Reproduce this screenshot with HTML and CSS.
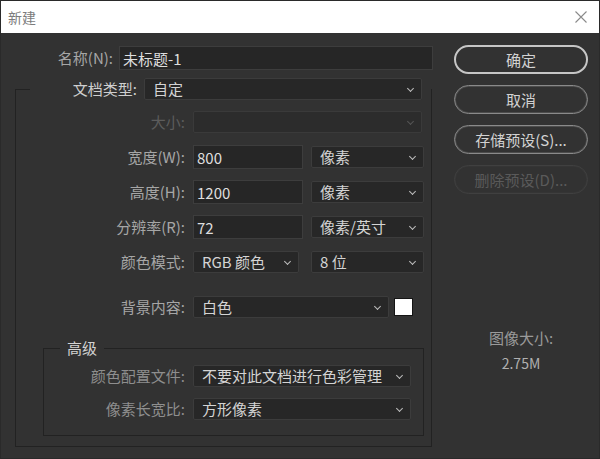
FILE: index.html
```html
<!DOCTYPE html>
<html lang="zh-CN">
<head>
  <meta charset="UTF-8" />
  <title>新建</title>
  <link rel="stylesheet" href="styles.css">
</head>
<body>
  <div class="window">
    <div class="titlebar">
      <span class="title">新建</span>
      <svg class="close" width="12" height="12" viewBox="0 0 12 12">
        <path d="M0.5 0.5L11.5 11.5M11.5 0.5L0.5 11.5" stroke="#8a8a8a" stroke-width="1.1" fill="none"/>
      </svg>
    </div>

    <div class="content">
      <div class="form">
        <div class="name-row">
          <label class="lbl name-lbl">名称(N):</label>
          <input class="field name-field" type="text" value="未标题-1">
        </div>

        <fieldset class="frame">
          <legend class="frame-head">
            <label class="lbl type-lbl">文档类型:</label>
            <div class="select type-select">自定</div>
          </legend>

          <div class="rows">
            <div class="row">
              <label class="lbl off">大小:</label>
              <div class="select size-select disabled"></div>
            </div>
            <div class="row">
              <label class="lbl">宽度(W):</label>
              <input class="field num" type="text" value="800">
              <div class="select unit">像素</div>
            </div>
            <div class="row">
              <label class="lbl">高度(H):</label>
              <input class="field num" type="text" value="1200">
              <div class="select unit">像素</div>
            </div>
            <div class="row">
              <label class="lbl">分辨率(R):</label>
              <input class="field num" type="text" value="72">
              <div class="select unit">像素/英寸</div>
            </div>
            <div class="row">
              <label class="lbl">颜色模式:</label>
              <div class="select mode">RGB 颜色</div>
              <div class="select unit">8 位</div>
            </div>
            <div class="row bg-row">
              <label class="lbl">背景内容:</label>
              <div class="select bg-select">白色</div>
              <div class="swatch"></div>
            </div>
          </div>

          <fieldset class="frame advanced">
            <legend class="adv-head">高级</legend>
            <div class="rows adv-rows">
              <div class="row">
                <label class="lbl adv-lbl">颜色配置文件:</label>
                <div class="select adv-select">不要对此文档进行色彩管理</div>
              </div>
              <div class="row">
                <label class="lbl adv-lbl">像素长宽比:</label>
                <div class="select adv-select">方形像素</div>
              </div>
            </div>
          </fieldset>
        </fieldset>
      </div>

      <div class="side">
        <div class="btn primary">确定</div>
        <div class="btn">取消</div>
        <div class="btn">存储预设(S)...</div>
        <div class="btn disabled">删除预设(D)...</div>

        <div class="info">
          <div class="info-title">图像大小:</div>
          <div class="info-value">2.75M</div>
        </div>
      </div>
    </div>
  </div>
</body>
</html>
```

FILE: styles.css
```css
* {
  box-sizing: border-box;
}
body {
  margin: 0;
  background: #323232;
  font-family: "Noto Sans CJK SC", "Noto Sans", sans-serif;
  font-size: 15px;
  color: #a8a8a8;
}
.window {
  width: 600px;
  height: 459px;
  border: 1px solid #2a2a2a;
  background: #323232;
  overflow: hidden;
}
.titlebar {
  height: 32px;
  background: #fff;
  display: flex;
  align-items: center;
  justify-content: space-between;
  padding: 0 12px 0 7px;
}
.title {
  font-size: 14px;
  color: #7c7c7c;
}
.close {
  display: block;
}

.content {
  display: flex;
  padding-top: 13px;
}
.form {
  width: 432px;
}

.lbl {
  text-align: right;
  color: #a6a6a6;
  white-space: nowrap;
  line-height: 24px;
}
.lbl.off {
  color: #5c5c5c;
}

.field {
  height: 24px;
  background: #262626;
  border: 1px solid #3d3d3d;
  color: #dedede;
  font-family: inherit;
  font-size: 15px;
  padding: 0 3px;
  outline: none;
  margin: 0;
}
.select {
  position: relative;
  height: 22px;
  line-height: 20px;
  background: #272727;
  border: 1px solid #3c3c3c;
  border-radius: 2px;
  color: #d4d4d4;
  padding: 0 20px 0 8px;
  white-space: nowrap;
  overflow: hidden;
}
.select::after {
  content: "";
  position: absolute;
  right: 8px;
  top: 7px;
  width: 4px;
  height: 4px;
  border-right: 1.5px solid #bdbdbd;
  border-bottom: 1.5px solid #bdbdbd;
  transform: rotate(45deg);
}
.select.disabled {
  background: #2c2c2c;
  border-color: #3a3a3a;
}
.select.disabled::after {
  border-color: #555;
}

.name-row {
  display: flex;
  align-items: center;
  gap: 6px;
}
.name-lbl {
  width: 112px;
}
.name-field {
  width: 314px;
}

.frame {
  margin: 7px 0 0 14px;
  width: 417px;
  padding: 0 0 10px 0;
  border: 1px solid #222;
}
.frame-head {
  display: flex;
  align-items: center;
  gap: 7px;
  padding: 0;
  margin-left: 14px;
  width: 401px;
}
.type-lbl {
  width: 107px;
  color: #cfcfcf;
}
.type-select {
  width: 278px;
}

.rows {
  display: flex;
  flex-direction: column;
  gap: 11px;
  padding-top: 9px;
}
.row {
  display: flex;
  align-items: center;
  height: 24px;
  gap: 8px;
}
.row > .lbl {
  width: 169px;
}
.size-select {
  width: 229px;
}
.num {
  width: 110px;
}
.unit {
  width: 113px;
}
.mode {
  width: 106px;
  margin-right: 4px;
}
.bg-row {
  margin-top: 10px;
}
.bg-select {
  width: 196px;
}
.swatch {
  width: 19px;
  height: 18px;
  background: #fff;
  border: 1px solid #151515;
  margin-left: -3px;
}

.advanced {
  margin: 19px 0 0 27px;
  width: 381px;
  padding: 0 0 14px 0;
}
.adv-head {
  padding: 0 7px;
  margin-left: 16px;
  line-height: 20px;
  color: #d2d2d2;
}
.adv-rows {
  padding-top: 6px;
  gap: 9px;
}
.row > .adv-lbl {
  width: 141px;
  color: #8e8e8e;
}
.adv-select {
  width: 218px;
}

.side {
  margin-left: 21px;
  width: 134px;
  display: flex;
  flex-direction: column;
  gap: 11px;
}
.btn {
  height: 29px;
  border-radius: 15px;
  border: 1px solid #8a8a8a;
  box-shadow: inset 0 0 0 1px rgba(138, 138, 138, 0.3);
  color: #d2d2d2;
  text-align: center;
  line-height: 27px;
}
.btn.primary {
  margin-top: -1px;
  border: 2px solid #c6c6c6;
  box-shadow: none;
  line-height: 25px;
}
.btn.disabled {
  border-color: #404040;
  box-shadow: inset 0 0 0 1px rgba(64, 64, 64, 0.3);
  color: #5a5a5a;
}

.info {
  margin-top: 123px;
  text-align: center;
}
.info-title {
  line-height: 20px;
  color: #9a9a9a;
}
.info-value {
  margin-top: 5px;
  line-height: 20px;
  font-size: 14px;
  color: #b0b0b0;
}
```
